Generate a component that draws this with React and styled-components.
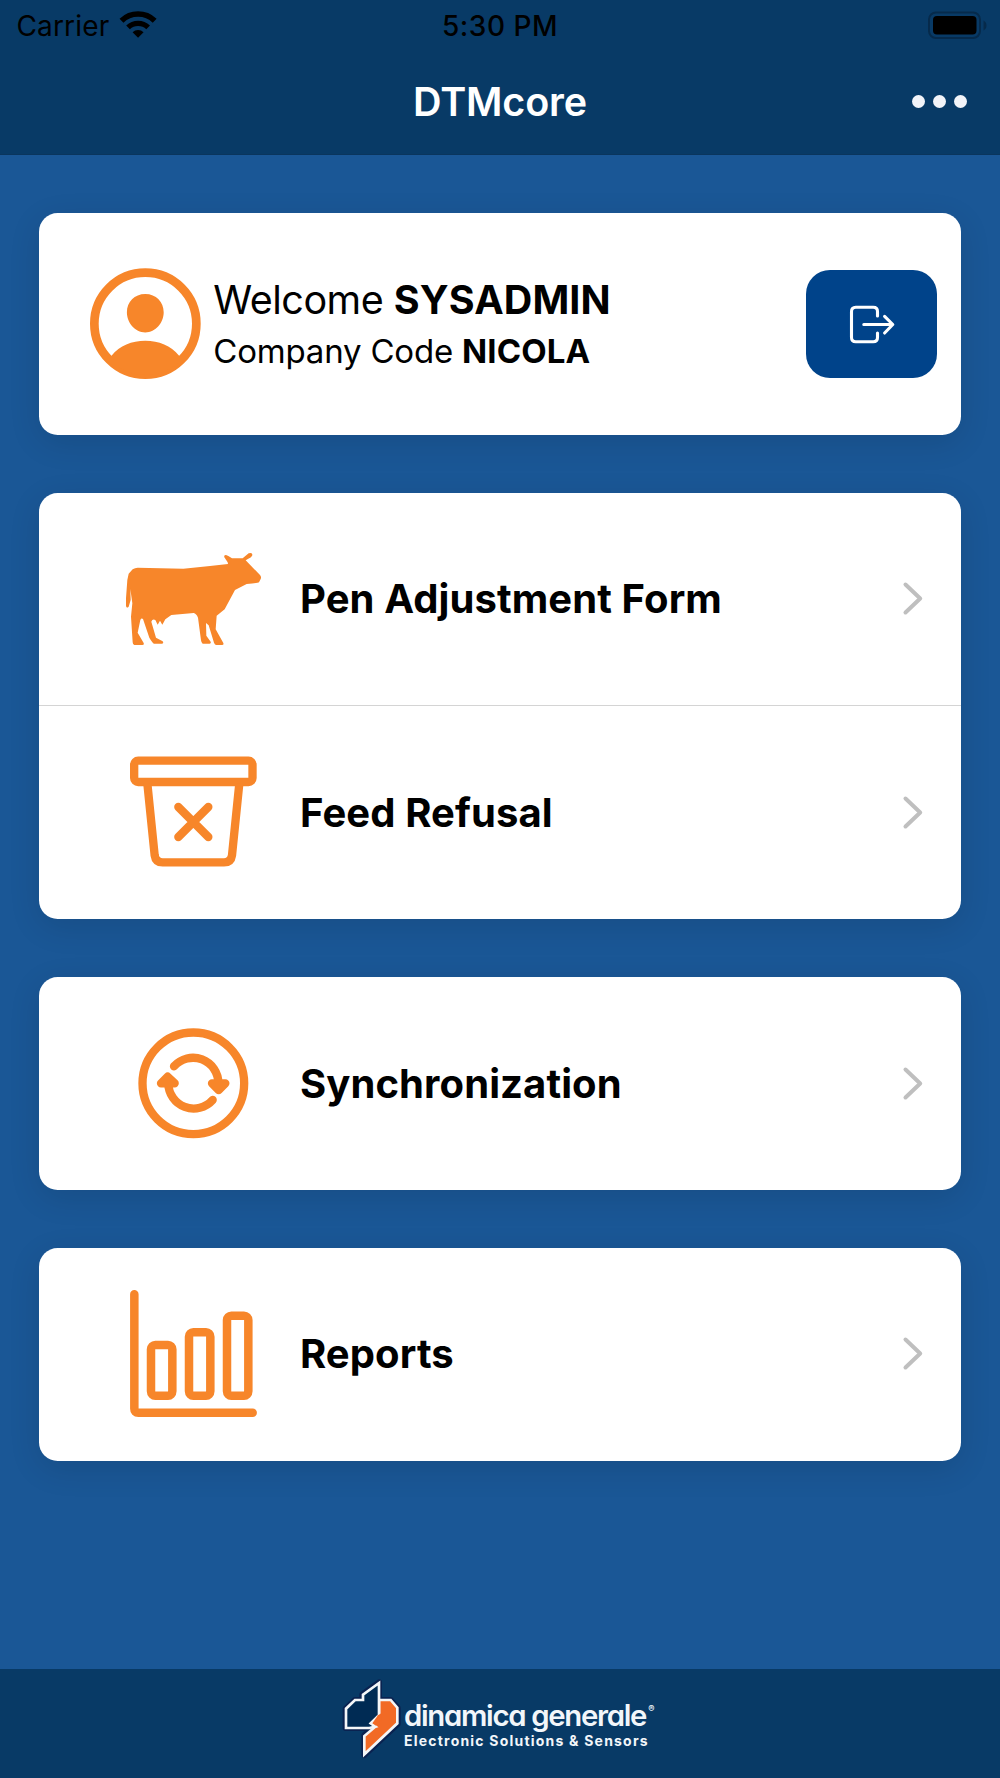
import React from 'react';
import styled, { createGlobalStyle } from 'styled-components';

const ORANGE = '#f7862a';

const GlobalStyle = createGlobalStyle`
  * {
    box-sizing: border-box;
  }
  body {
    margin: 0;
    font-family: Inter, Roboto, sans-serif;
  }
  svg {
    overflow: visible;
  }
`;

const Screen = styled.div`
  display: flex;
  flex-direction: column;
  width: 1000px;
  height: 1778px;
  background-color: #1a5796;
  overflow: hidden;
`;

const Header = styled.header`
  display: flex;
  flex-direction: column;
  height: 154.67px;
  background-color: #083a66;
  border-bottom: 1px solid #0a355d;
`;

const StatusBar = styled.div`
  display: grid;
  grid-template-columns: 1fr auto 1fr;
  align-items: center;
  height: 51px;
  padding: 0 13px;
  color: #000;
  font-size: 28px;
  line-height: 34px;
`;

const Carrier = styled.div`
  display: flex;
  align-items: center;
  gap: 11px;
  padding-left: 3.5px;
  letter-spacing: 0.15px;
`;

const Clock = styled.div`
  font-weight: 500;
  letter-spacing: 0.5px;
`;

const WifiGlyph = styled.svg`
  margin-bottom: 3px;
`;

const BatteryIcon = styled.svg`
  justify-self: end;
`;

const NavBar = styled.div`
  display: grid;
  grid-template-columns: 1fr auto 1fr;
  align-items: center;
  height: 102px;
  padding: 0 33px;
`;

const Title = styled.h1`
  grid-column: 2;
  margin: 0;
  color: #fff;
  font-weight: 600;
  font-size: 39.5px;
  line-height: 48px;
  letter-spacing: -0.15px;
`;

const MenuButton = styled.button`
  display: flex;
  justify-self: end;
  gap: 8px;
  padding: 0 0 2px;
  border: 0;
  background: none;
`;

const Dot = styled.span`
  width: 13px;
  height: 13px;
  border-radius: 50%;
  background-color: #f2f4f9;
`;

const Content = styled.main`
  display: flex;
  flex: 1;
  flex-direction: column;
  gap: 58px;
  padding: 58px 38.67px 0;
`;

const Card = styled.section`
  border-radius: 18.67px;
  background-color: #fff;
  box-shadow: 0 8px 32px rgba(0, 0, 0, 0.11);
`;

const ProfileCard = styled(Card)`
  display: flex;
  align-items: center;
  height: 222px;
  padding: 0 24.3px 0 51px;
`;

const Greeting = styled.div`
  flex: 1;
  margin-left: 13px;
  color: #000;
`;

const GreetingLine = styled.p`
  margin: 0;
  font-size: ${props => props.size}px;
  line-height: ${props => props.height}px;
  letter-spacing: ${props => props.spacing}px;

  b {
    letter-spacing: 0.1px;
  }
`;

const LogoutButton = styled.button`
  display: flex;
  align-items: center;
  justify-content: center;
  width: 131px;
  height: 108px;
  padding: 0;
  border: 0;
  border-radius: 24px;
  background-color: #00438a;
`;

const MenuRow = styled.div`
  display: flex;
  align-items: center;
  height: 212.67px;
  padding: 0 38.5px 0 86.33px;

  & + & {
    height: 214px;
    border-top: 1.33px solid #d4d4d4;
  }
`;

const RowIcon = styled.svg`
  width: 136px;
  height: 136px;
`;

const RowLabel = styled.span`
  flex: 1;
  margin-left: 39px;
  color: #000;
  font-weight: 700;
  font-size: 40px;
  line-height: 48px;
  letter-spacing: 0.1px;
`;

const Footer = styled.footer`
  display: flex;
  justify-content: center;
  height: 109px;
  background-color: #083a66;
`;

const BrandName = styled.text`
  font-weight: 600;
  font-size: 88px;
  font-feature-settings: 'cv11';
`;

const WifiIcon = () => (
  <WifiGlyph width="36.5" height="27" viewBox="360 30 111 81">
    <g fill="none" stroke="#000">
      <path d="M364.6 58.9a72.5 72.5 0 0 1 100.8 0" strokeWidth="17" />
      <path d="M384.4 79.4a44 44 0 0 1 61.2 0" strokeWidth="16" />
    </g>
    <path d="M415 111L398.3 93.7a24 24 0 0 1 33.4 0z" />
  </WifiGlyph>
);

const Battery = () => (
  <BatteryIcon width="59" height="28" viewBox="0 0.5 59 28">
    <rect x="1" y="1" width="51" height="25.5" rx="7" fill="none" stroke="#062a4b" strokeWidth="2" />
    <rect x="5" y="4.5" width="43.5" height="18.5" rx="4" />
    <path d="M55.5 9q3 1.6 3 5t-3 5z" fill="#062a4b" />
  </BatteryIcon>
);

const Avatar = () => (
  <svg width="110.7" height="110.7" viewBox="0 -0.3 110.7 110.7">
    <circle cx="55.35" cy="55.35" r="51" fill="none" stroke={ORANGE} strokeWidth="8.7" />
    <path
      d="M55.3 25.7c10.8 0 18.4 8 18.4 18.2 0 10.4-8 20.2-18.4 20.2s-18.4-9.8-18.4-20.2c0-10.2 7.6-18.2 18.4-18.2z"
      fill={ORANGE}
    />
    <path d="M21.7 87.2c8-9.7 20-14.7 33.6-14.7s25.6 5 33.6 14.7l3.5 3.5a51 51 0 0 1-74.2 0z" fill={ORANGE} />
  </svg>
);

const LogoutIcon = () => (
  <svg width="48" height="48" viewBox="0.7 0 48 48" fill="none" stroke="#fff" strokeWidth="3.1" strokeLinecap="round" strokeLinejoin="round">
    <path d="M30.2 16V11.5q0-4.3-4.3-4.3H8.5q-4.3 0-4.3 4.3V37.5q0 4.2 4.3 4.2H25.9q4.3 0 4.3-4.2V33" />
    <path d="M16.5 24.5H45.5M37.3 16.3L45.5 24.5L37.3 33" />
  </svg>
);

const Chevron = () => (
  <svg width="20" height="34" viewBox="0 0.5 20 34">
    <path d="M2.5 3L17.2 17L2.5 31" fill="none" stroke="#bfbfbf" strokeWidth="4" strokeLinecap="round" strokeLinejoin="round" />
  </svg>
);

const CowIcon = () => (
  <RowIcon viewBox="75 3 408 408" fill={ORANGE}>
    <path d="M113 113L250 116L330 108L384 102L383 97L373 82Q371 75 378 75L385 78L396 85H428L446 70Q458 66 457 76L453 82L437 91L480 135Q485 141 482 147L477 157Q474 159 440 162L405 180L374 238L350 257L347 298L370 339Q372 345 366 345H348Q344 344 342 338L326 286L318 279L319 317L332 335Q334 340 329 341H308Q304 339 303 331L294 263Q289 251 281 249L214 255L196 268L187 284L180 272L173 284L166 270Q157 266 154 275L168 323L188 334Q192 339 187 341H162Q158 340 148 323L129 267Q124 263 121 270L113 308L131 339Q133 345 127 345H103Q98 344 98 337L93 260L97 220L91 177L92 210L86 230Q80 236 78 228V205L82 150L86 131L98 118Q105 113 113 113Z" />
  </RowIcon>
);

const BinIcon = () => (
  <RowIcon viewBox="75 45 408 408" fill="none" stroke={ORANGE} strokeWidth="25" strokeLinecap="round">
    <rect x="102.5" y="92" width="355" height="64" rx="12" />
    <path d="M142 160L164 376Q167 397 188 397H372Q393 397 396 376L418 160" strokeLinecap="butt" />
    <path d="M235 231L325 321M325 231L235 321" />
  </RowIcon>
);

const SyncIcon = () => (
  <RowIcon viewBox="15 17 408 408" fill="none" stroke={ORANGE} strokeWidth="25" strokeLinecap="round">
    <circle cx="220" cy="219" r="152.5" />
    <path d="M162 168A76 76 0 0 1 295 219" />
    <path d="M278 269A76 76 0 0 1 145 219" />
    <g fill={ORANGE} strokeLinejoin="round">
      <path d="M276 219H316L296 239Z" />
      <path d="M123 219H164L143 199Z" />
    </g>
  </RowIcon>
);

const ChartIcon = () => (
  <RowIcon viewBox="45 48 408 408" fill="none" stroke={ORANGE} strokeWidth="25.5" strokeLinecap="round">
    <path d="M73 73V416Q73 428 85 428H428" />
    <rect x="123" y="225" width="64" height="152" rx="13" />
    <rect x="237" y="187" width="64" height="190" rx="13" />
    <rect x="351" y="137" width="64" height="240" rx="13" />
  </RowIcon>
);

const BrandLogo = () => (
  <svg width="340" height="109" viewBox="0 27 1020 327">
    <g stroke="#0a2250" strokeWidth="18" strokeLinejoin="round" fill="#0a2250">
      <path d="M147 67L97 103V120H75L47 146V204H122L147 166Z" />
      <path d="M147 120H182L203 143V192L103 285V226L130 202L147 166Z" />
    </g>
    <g stroke="#f4f6f8" strokeWidth="8">
      <path d="M147 120H182L202 143V190L103 283V228L136 200L122 190L147 166Z" fill="#f26a25" />
      <path d="M147 69L99 104V120H75L48 146V204H118L136 200L122 190L147 166Z" fill="#002b54" />
    </g>
    <path d="M144 166L154 160V180L138 197L127 190Z" fill="#f26a25" />
    <g fill="#f2f6fa">
      <BrandName x="222" y="197" textLength="730">dinamica generale</BrandName>
      <text x="955" y="157" fontSize="28" fontWeight="600">®</text>
      <text x="222" y="257" fontSize="42" fontWeight="700" textLength="731">
        Electronic Solutions &amp; Sensors
      </text>
    </g>
  </svg>
);

const MenuItem = ({ icon: Icon, label }) => (
  <MenuRow>
    <Icon />
    <RowLabel>{label}</RowLabel>
    <Chevron />
  </MenuRow>
);

const App = () => (
  <Screen>
    <GlobalStyle />
    <Header>
      <StatusBar>
        <Carrier>
          Carrier
          <WifiIcon />
        </Carrier>
        <Clock>5:30 PM</Clock>
        <Battery />
      </StatusBar>
      <NavBar>
        <Title>DTMcore</Title>
        <MenuButton aria-label="Menu">
          <Dot />
          <Dot />
          <Dot />
        </MenuButton>
      </NavBar>
    </Header>
    <Content>
      <ProfileCard>
        <Avatar />
        <Greeting>
          <GreetingLine size={39.5} height={54} spacing={-0.5}>
            Welcome <b>SYSADMIN</b>
          </GreetingLine>
          <GreetingLine size={33} height={48} spacing={-0.2}>
            Company Code <b>NICOLA</b>
          </GreetingLine>
        </Greeting>
        <LogoutButton aria-label="Log out">
          <LogoutIcon />
        </LogoutButton>
      </ProfileCard>
      <Card>
        <MenuItem icon={CowIcon} label="Pen Adjustment Form" />
        <MenuItem icon={BinIcon} label="Feed Refusal" />
      </Card>
      <Card>
        <MenuItem icon={SyncIcon} label="Synchronization" />
      </Card>
      <Card>
        <MenuItem icon={ChartIcon} label="Reports" />
      </Card>
    </Content>
    <Footer>
      <BrandLogo />
    </Footer>
  </Screen>
);

export default App;
